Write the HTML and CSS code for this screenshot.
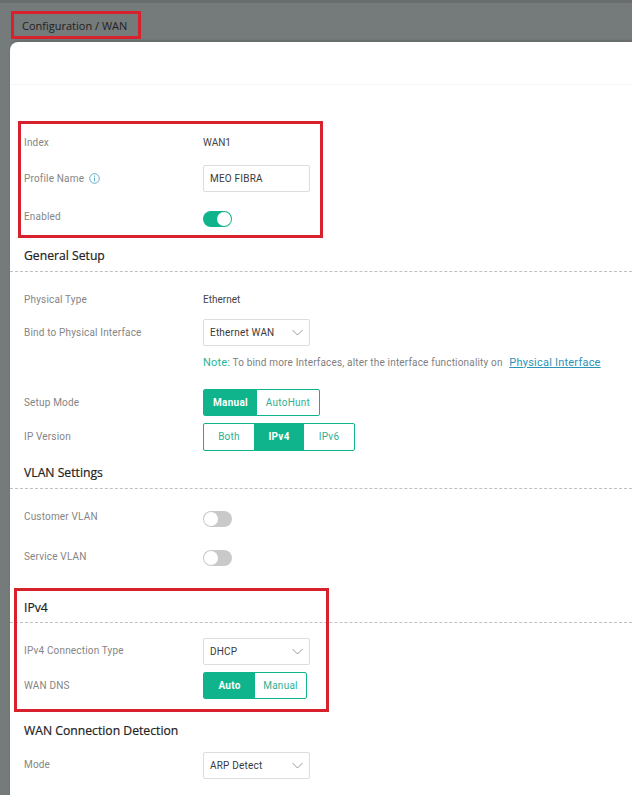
FILE: index.html
```html
<!DOCTYPE html>
<html lang="en">
<head>
<meta charset="utf-8">
<title>Configuration / WAN</title>
<link rel="stylesheet" href="styles.css">
</head>
<body>
<div class="page">
  <div class="topbar"><span class="crumb">Configuration / WAN</span></div>
  <main class="panel">
    <div class="panel-head"></div>
    <section class="group group-first">
      <div class="row h-index"><span class="label label-nudge">Index</span><span class="value value-nudge">WAN1</span></div>
      <div class="row h-profile"><span class="label">Profile Name
        <svg class="info" width="11" height="11" viewBox="0 0 11 11"><circle cx="5.5" cy="5.5" r="4.8" fill="none" stroke="#4fa8c9" stroke-width="0.9"/><path d="M5.5 4.8V8.2M5.5 2.7V3.8" stroke="#4fa8c9" stroke-width="1" fill="none"/></svg></span>
        <span class="input">MEO FIBRA</span></div>
      <div class="row h-enabled"><span class="label label-up">Enabled</span><span class="toggle on"><i class="knob"></i></span></div>
    </section>
    <h2 class="section-title">General Setup</h2>
    <section class="group">
      <div class="row h-phys"><span class="label">Physical Type</span><span class="value">Ethernet</span></div>
      <div class="row h-bind"><span class="label">Bind to Physical Interface</span>
        <span class="select"><span>Ethernet WAN</span><svg class="chev" width="11" height="7" viewBox="0 0 11 7"><path d="M.5 1l5 5 5-5" fill="none" stroke="#808080" stroke-width="0.8"/></svg></span></div>
      <div class="row h-note"><span class="label"></span><span class="note"><b class="note-key">Note:</b> To bind more Interfaces, alter the interface functionality on <a class="link" href="#">Physical Interface</a></span></div>
      <div class="row h-mode"><span class="label">Setup Mode</span>
        <span class="seg"><span class="opt active w-manual">Manual</span><span class="opt w-autohunt">AutoHunt</span></span></div>
      <div class="row h-ip"><span class="label">IP Version</span>
        <span class="seg tall"><span class="opt w-both">Both</span><span class="opt active w-ipv4">IPv4</span><span class="opt w-ipv6">IPv6</span></span></div>
    </section>
    <h2 class="section-title title-vlan">VLAN Settings</h2>
    <section class="group">
      <div class="row h-cvlan"><span class="label label-up">Customer VLAN</span><span class="toggle"><i class="knob"></i></span></div>
      <div class="row h-svlan"><span class="label label-mode">Service VLAN</span><span class="toggle"><i class="knob"></i></span></div>
    </section>
    <h2 class="section-title title-ipv4">IPv4</h2>
    <section class="group">
      <div class="row h-conn"><span class="label label-nudge">IPv4 Connection Type</span>
        <span class="select"><span>DHCP</span><svg class="chev" width="11" height="7" viewBox="0 0 11 7"><path d="M.5 1l5 5 5-5" fill="none" stroke="#808080" stroke-width="0.8"/></svg></span></div>
      <div class="row h-dns"><span class="label">WAN DNS</span>
        <span class="seg"><span class="opt active w-auto">Auto</span><span class="opt w-man2">Manual</span></span></div>
    </section>
    <h2 class="section-title title-plain">WAN Connection Detection</h2>
    <section class="group">
      <div class="row h-detect"><span class="label label-detect">Mode</span>
        <span class="select"><span>ARP Detect</span><svg class="chev" width="11" height="7" viewBox="0 0 11 7"><path d="M.5 1l5 5 5-5" fill="none" stroke="#808080" stroke-width="0.8"/></svg></span></div>
    </section>
  </main>
  <div class="mark mark-title"></div>
  <div class="mark mark-basic"></div>
  <div class="mark mark-ipv4"></div>
</div>
</body>
</html>
```
FILE: styles.css
```css
* { box-sizing: border-box; }
html, body { margin: 0; padding: 0; }
body { background: #757a7a; font-family: Roboto, "Noto Sans", sans-serif; color: #333; overflow: hidden; }
.page { position: relative; width: 632px; height: 795px; overflow: hidden; border-top: 3px solid #6a6d6d; }
.topbar { height: 39px; display: flex; align-items: center; padding: 5px 0 0 22px; }
.crumb { font-family: "Open Sans", sans-serif; font-size: 11px; color: #222; }
.panel { margin-left: 10px; height: 760px; background: #fff; border-top-left-radius: 8px; box-shadow: 0 -2px 2px rgba(0,0,0,.12); padding-left: 14px; }
.panel-head { height: 43px; margin-left: -14px; border-bottom: 1px solid #f7f7f7; }
.group-first { padding-top: 45px; }
.row { display: flex; align-items: center; font-size: 10px; }
.label { width: 179px; flex: none; color: #858585; letter-spacing: .17px; display: flex; align-items: center; gap: 5px; }
.label-up { position: relative; top: -3px; }
.label-mode { position: relative; top: -2px; }
.label-detect { position: relative; top: -1px; }
.label-nudge { position: relative; top: -1px; }
.value { color: #444; }
.value-nudge { position: relative; top: -1px; }
.info { flex: none; }
.h-index { height: 27px; }
.h-profile { height: 39px; margin-top: 2px; }
.h-enabled { height: 16px; margin-top: 13px; }
.input, .select { width: 107px; height: 27px; border: 1px solid #ddd; border-radius: 2px; background: #fff; color: #3a3a3a; display: flex; align-items: center; justify-content: space-between; padding: 0 6px; font-size: 10px; letter-spacing: .2px; }
.chev { flex: none; }
.toggle { width: 29px; height: 16px; border-radius: 8px; background: #c9c9c9; display: flex; align-items: center; padding: 0 1px; }
.toggle.on { background: #10b48c; justify-content: flex-end; }
.knob { width: 14px; height: 14px; border-radius: 50%; background: #fff; display: block; }
.section-title { margin: 11px 0 0; height: 34px; padding: 9px 0 0; font-family: "Open Sans", sans-serif; font-size: 12.2px; font-weight: 400; line-height: 18px; color: #222; -webkit-text-stroke: .2px #222; position: relative; }
.section-title::after { content: ""; position: absolute; left: -14px; right: 0; bottom: 0; border-bottom: 1px dashed #c0c0c0; }
.title-vlan { margin-top: 4px; }
.title-ipv4 { margin-top: 23px; padding-top: 10px; }
.title-plain { margin-top: 14px; height: 26px; }
.title-plain::after { display: none; }
.h-phys { height: 20px; margin-top: 17px; }
.h-bind { height: 27px; margin-top: 10px; }
.h-note { height: 18px; margin-top: 7px; }
.h-mode { height: 27px; margin-top: 18px; }
.h-ip { height: 29px; margin-top: 6px; }
.note { white-space: nowrap; color: #808080; letter-spacing: .17px; }
.note-key { font-weight: 400; color: #27b596; font-size: 11px; }
.link { color: #2b93b5; font-size: 11px; margin-left: 4px; letter-spacing: .22px; }
.seg { display: flex; height: 27px; border: 1px solid #10b48c; border-radius: 2px; overflow: hidden; }
.seg.tall { height: 28px; }
.opt { display: flex; align-items: center; justify-content: center; color: #2fb093; font-size: 10px; font-weight: 400; letter-spacing: .25px; }
.opt.active { background: #10b48c; color: #fff; font-weight: 700; }
.w-manual { width: 53px; } .w-autohunt { width: 62px; }
.w-both { width: 50px; } .w-ipv4 { width: 50px; } .w-ipv6 { width: 50px; }
.w-auto { width: 51px; } .w-man2 { width: 51px; }
.h-cvlan { height: 16px; margin-top: 22px; }
.h-svlan { height: 16px; margin-top: 23px; }
.h-conn { height: 27px; margin-top: 15px; }
.h-dns { height: 27px; margin-top: 7px; }
.h-detect { height: 27px; margin-top: 13px; }
.mark { position: absolute; border: 3px solid #d7222e; pointer-events: none; }
.mark-title { left: 11px; top: 8px; width: 130px; height: 28px; }
.mark-basic { left: 18px; top: 118px; width: 305px; height: 117px; }
.mark-ipv4 { left: 14px; top: 585px; width: 315px; height: 124px; }
```
